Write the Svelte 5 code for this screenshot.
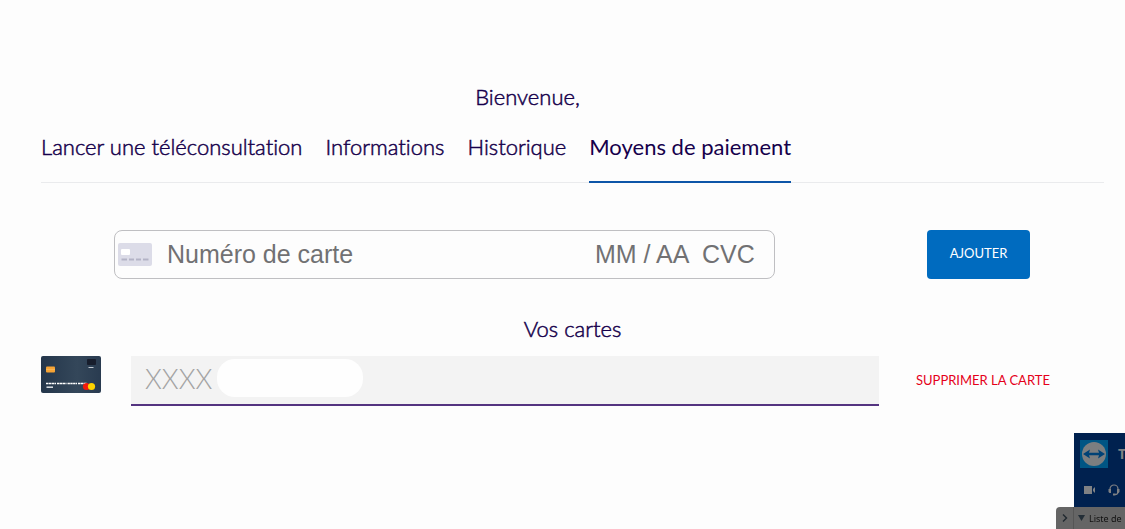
<script lang="ts">
  const tabs = ["Lancer une téléconsultation", "Informations", "Historique", "Moyens de paiement"];

  let active = $state("Moyens de paiement");
  let cardNumber = $state("");
  let expiry = $state("");
  let cvc = $state("");
</script>

<main>
  <h1>Bienvenue,</h1>

  <nav>
    {#each tabs as tab}
      <button class="tab" class:active={tab === active} onclick={() => (active = tab)}>{tab}</button>
    {/each}
  </nav>

  <form onsubmit={(e) => e.preventDefault()}>
    <div class="card-field">
      <svg class="brand" viewBox="0 0 34 23" aria-hidden="true">
        <rect width="34" height="23" rx="2" fill="#dcdce8" />
        <rect x="3" y="6" width="9" height="6" rx="1" fill="#fff" />
        <path d="M3.500 16.500h5.500m2 0h5m2 0h5m2 0h5.500" stroke="#b3b3c6" stroke-width="2" />
      </svg>
      <input class="number" aria-label="Numéro de carte" placeholder="Numéro de carte" bind:value={cardNumber} />
      <input class="expiry" aria-label="Date d'expiration" placeholder="MM / AA" bind:value={expiry} />
      <input class="cvc" aria-label="CVC" placeholder="CVC" bind:value={cvc} />
    </div>
    <button class="add" type="submit">AJOUTER</button>
  </form>

  <h2>Vos cartes</h2>

  <div class="saved">
    <svg class="card" viewBox="0 0 60 37" aria-hidden="true">
      <defs>
        <linearGradient id="card-bg" x2="1">
          <stop offset="0" stop-color="#24364b" />
          <stop offset=".6" stop-color="#34475a" />
          <stop offset="1" stop-color="#293b50" />
        </linearGradient>
      </defs>
      <rect width="60" height="37" rx="2" fill="url(#card-bg)" />
      <rect x="5" y="10.500" width="9" height="6" rx="1" fill="#f7a435" />
      <path d="M5 13.500h9" stroke="#fbc36b" stroke-width=".6" />
      <rect x="46" y="3" width="9" height="6" rx="1" fill="#171d2c" />
      <path d="M47.500 11.500h5" stroke="#c3c9d0" />
      <path d="M5 27.500h10m1 0h9.500m1 0h9.500m1 0h9" stroke="#fff" stroke-width="1.500" stroke-dasharray="2.400 .4" />
      <path d="M5.500 31.200h6.500" stroke="#dfe3e8" stroke-width="1.500" />
      <circle cx="45.500" cy="30.500" r="3.600" fill="#f21b0c" />
      <circle cx="50.500" cy="30.500" r="3.600" fill="#ffd400" />
    </svg>
    <div class="masked">
      <input aria-label="Carte enregistrée" value="XXXX" readonly />
      <span class="mask"></span>
    </div>
    <button class="remove">SUPPRIMER LA CARTE</button>
  </div>
</main>

<aside>
  <div class="panel">
    <div class="title">
      <svg viewBox="0 0 28 28" aria-hidden="true">
        <rect width="28" height="28" fill="#005584" />
        <circle cx="14" cy="14" r="12" fill="#7c7e80" />
        <path d="M3 14l7-4.500-1 3.300h10l-1-3.300 7 4.500-7 4.500 1-3.300H9l1 3.300z" fill="#004276" />
      </svg>
      <strong>T</strong>
    </div>
    <div class="tools">
      <svg viewBox="0 0 12 12" aria-hidden="true">
        <path d="M0 2h8v8H0zM9 5l2-2v6L9 7z" fill="#7f8184" />
      </svg>
      <svg viewBox="0 0 12 12" aria-hidden="true">
        <path d="M2 7V5a4 4 0 0 1 8 0v2M10 8q0 2.500-3 2.500" fill="none" stroke="#7f8184" stroke-width="1.200" />
        <path d="M.5 5H3v4H1.500L.5 8zM9 5h2.500v3l-1 1H9zM5 9.500h2.500v2H5z" fill="#7f8184" />
      </svg>
    </div>
  </div>
  <div class="bar">
    <button class="collapse" aria-label="Réduire">
      <svg viewBox="0 0 10 10" aria-hidden="true">
        <path d="M3 1.500L6.500 5L3 8.500" fill="none" stroke="#20282f" stroke-width="1.400" />
      </svg>
    </button>
    <div class="list">
      <svg viewBox="0 0 8 8" aria-hidden="true"><path d="M0 1h7L3.500 7z" fill="#232e37" /></svg>
      <span>Liste de</span>
    </div>
  </div>
</aside>

<style>
  :global(body) {
    background: #fdfdfd;
  }

  main {
    padding: 84px 21px 0 41px;
    font-family: Lato, "Open Sans", sans-serif;
    font-variant-ligatures: none;
    color: #16004b;
  }

  button,
  input {
    font: inherit;
    font-variant-ligatures: inherit;
    border: none;
    background: none;
    padding: 0;
    margin: 0;
    min-width: 0;
    box-sizing: border-box;
  }

  button {
    cursor: pointer;
  }

  h1,
  h2 {
    margin: 0;
    font-size: 22px;
    line-height: 26px;
    font-weight: 300;
    -webkit-text-stroke: 0.5px;
    text-align: center;
  }

  h1 {
    padding-right: 90px;
  }

  nav {
    display: flex;
    gap: 23px;
    margin-top: 24px;
    box-shadow: inset 0 -1px #eaebed;
  }

  .tab {
    font-size: 22px;
    font-weight: 300;
    -webkit-text-stroke: 0.5px;
    line-height: 26px;
    padding-bottom: 21px;
    border-bottom: 2px solid transparent;
    color: #16004b;
    white-space: nowrap;
  }

  .tab.active {
    border-color: #0d55a8;
    font-weight: 400;
    -webkit-text-stroke: 0;
  }

  form {
    display: grid;
    grid-template-columns: 661fr 103px;
    gap: 152px;
    margin: 47px 74px 0 73px;
  }

  .card-field {
    display: flex;
    align-items: center;
    height: 49px;
    box-sizing: border-box;
    padding: 0 16px 0 3px;
    border: 1px solid #bfbfc2;
    border-radius: 8px;
    font-family: "Liberation Sans", Arial, sans-serif;
    font-size: 25px;
  }

  .card-field input::placeholder {
    color: #717173;
    opacity: 1;
  }

  .brand {
    width: 34px;
    height: 23px;
    flex: none;
  }

  .number {
    flex: 1;
    margin-left: 15px;
  }

  .expiry {
    width: 107px;
  }

  .cvc {
    width: 56px;
  }

  .add {
    border-radius: 4px;
    background: #006bbf;
    color: #fff;
    font-size: 13px;
    padding-bottom: 3px;
  }

  h2 {
    margin-top: 37px;
  }

  .saved {
    display: grid;
    grid-template-columns: 60px 748fr 133px;
    align-items: start;
    margin: 14px 55px 0 0;
    column-gap: 30px;
  }

  .card {
    width: 60px;
    height: 37px;
  }

  .masked {
    position: relative;
    margin-right: 7px;
  }

  .masked input {
    display: block;
    width: 100%;
    height: 50px;
    padding: 0 14px 4px;
    background: #f3f3f3;
    border-bottom: 2px solid #543480;
    color: #a3a3a3;
    font-size: 27px;
    font-weight: 300;
  }

  .mask {
    position: absolute;
    left: 86px;
    top: 3px;
    width: 146px;
    height: 38px;
    border-radius: 18px;
    background: #fefefe;
  }

  .remove {
    height: 48px;
    color: #e5001a;
    font-size: 13px;
    white-space: nowrap;
  }

  aside {
    position: fixed;
    right: 0;
    bottom: 0;
    width: 69px;
    overflow: hidden;
    font-family: "Noto Sans", sans-serif;
  }

  .panel {
    height: 74px;
    margin-left: 18px;
    box-sizing: border-box;
    padding: 7px 0 0 6px;
    background: #00214f;
  }

  .title {
    display: flex;
    align-items: center;
    gap: 10px;
    color: #7f8184;
    font-size: 14px;
    line-height: 28px;
  }

  .title svg {
    width: 28px;
    height: 28px;
    flex: none;
  }

  .tools {
    display: flex;
    gap: 12px;
    padding: 16px 0 0 4px;
  }

  .tools svg {
    width: 12px;
    height: 12px;
  }

  .bar {
    display: flex;
    height: 22px;
    background: #656565;
    border-top-left-radius: 4px;
    overflow: hidden;
  }

  .collapse {
    width: 18px;
    border-right: 1px solid #555;
    flex: none;
  }

  .collapse svg {
    width: 10px;
    height: 10px;
    display: block;
    margin: 0 auto;
  }

  .list {
    display: flex;
    align-items: center;
    gap: 3px;
    padding-left: 4px;
    color: #111;
    font-size: 9px;
    white-space: nowrap;
  }

  .list svg {
    width: 8px;
    height: 8px;
    flex: none;
  }
</style>
